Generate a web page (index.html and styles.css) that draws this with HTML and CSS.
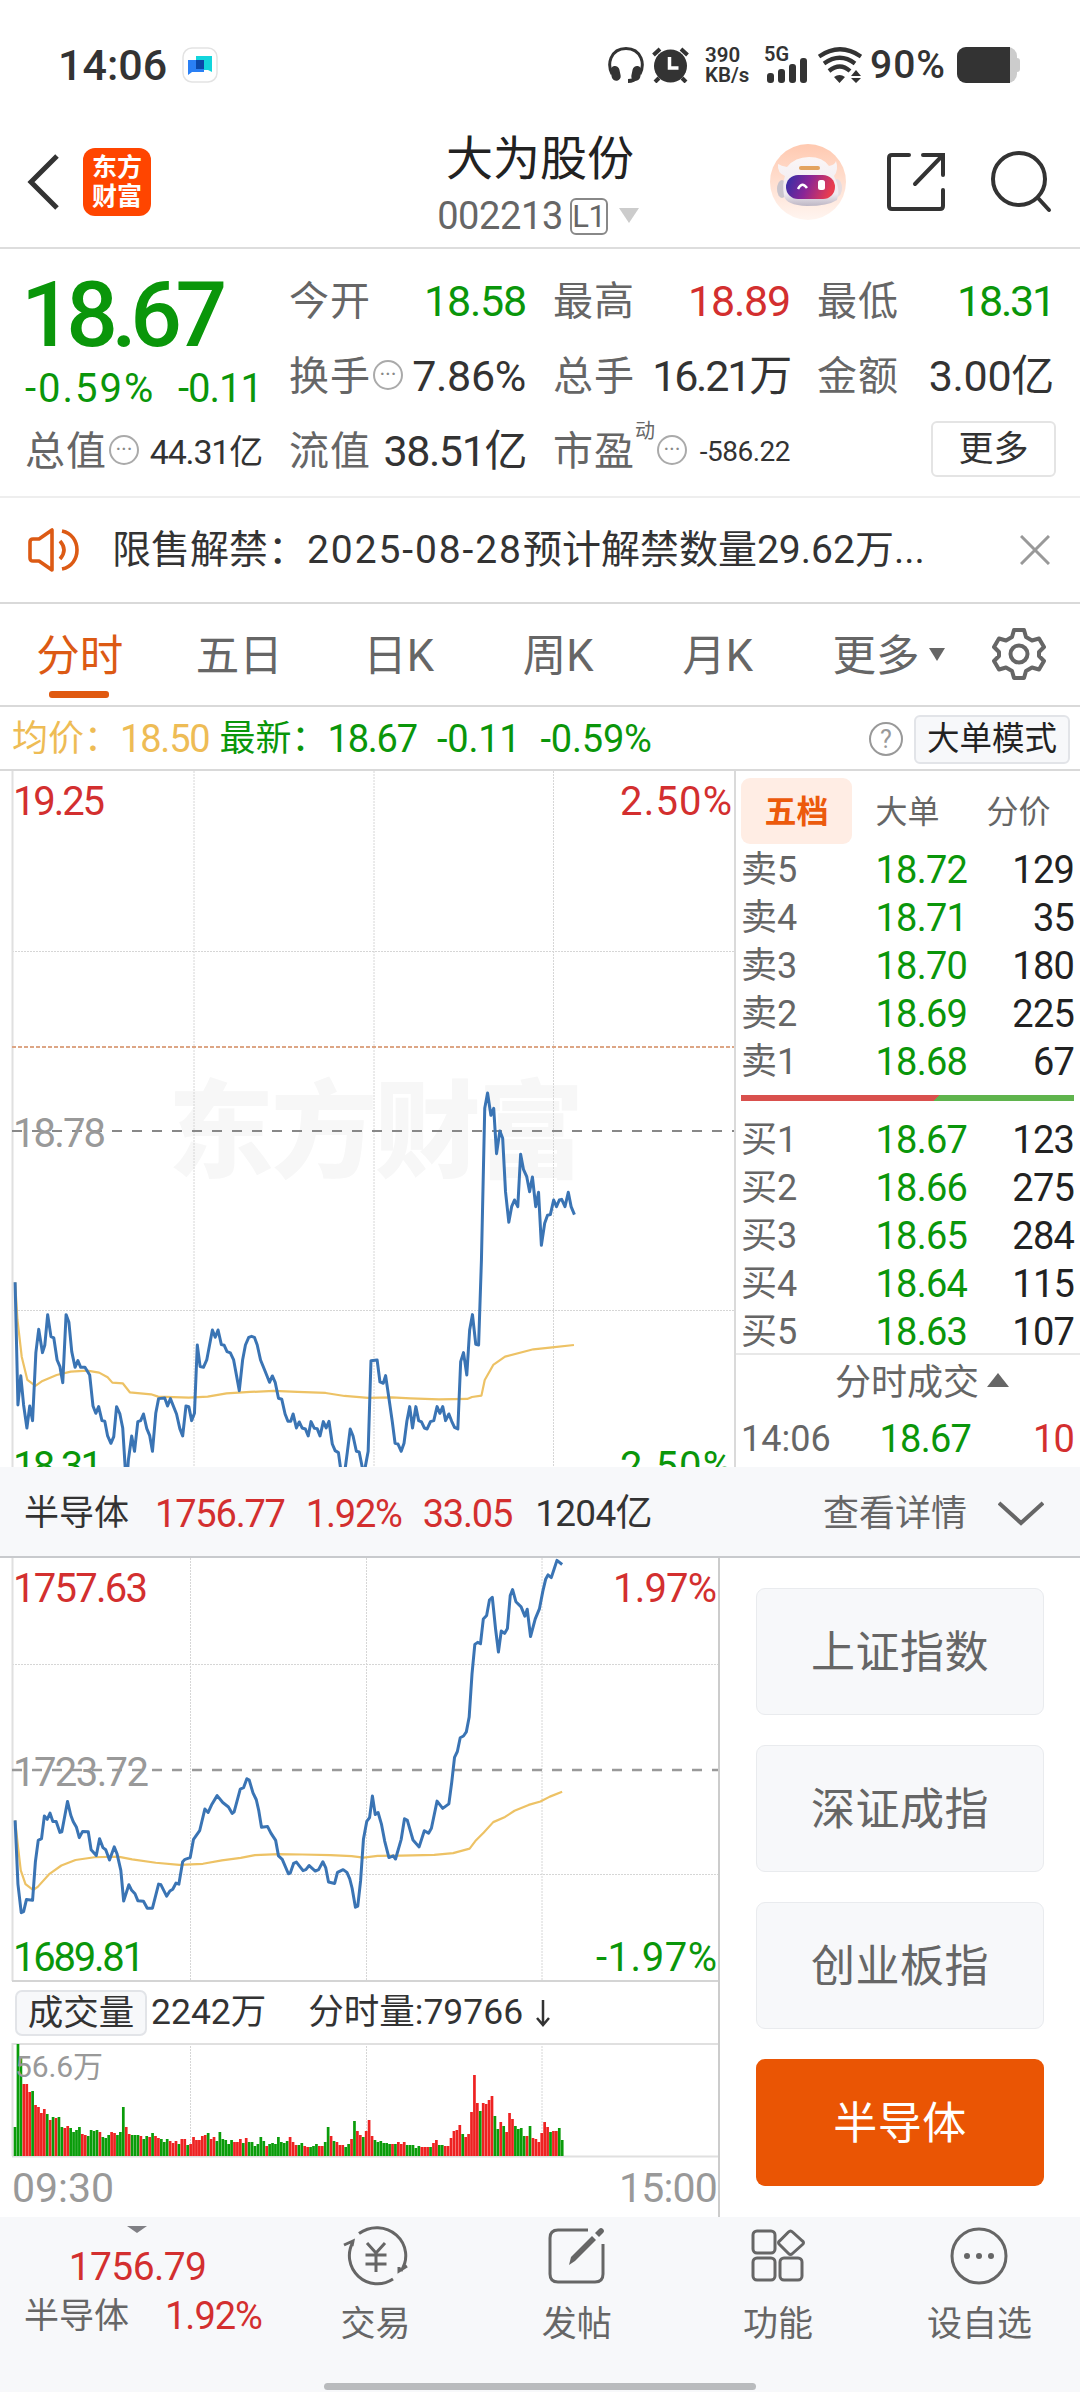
FILE: index.html
```
<!DOCTYPE html>
<html lang="zh-CN">
<head>
    <meta charset="UTF-8">
    <meta name="viewport" content="width=device-width, initial-scale=1.0">
    <title>大为股份 002213</title>
    <link rel="stylesheet" href="styles.css">
</head>
<body>
    <!-- Status bar -->
    <div class="status">
        <span class="clock">14:06</span>
        <svg class="app-badge" width="36" height="36" viewBox="0 0 36 36">
            <rect x="1" y="1" width="34" height="34" rx="9" fill="#fff" stroke="#e3e3e3" stroke-width="1.5"/>
            <path d="M14 9h16v16l-4-2H14z" fill="#12d5dc"/>
            <path d="M6 13h16v12H10l-4 3z" fill="#2a80f5"/>
            <rect x="14" y="13" width="8" height="9" fill="#0a48a8"/>
        </svg>
        <div class="status-right">
            <svg width="36" height="36" viewBox="0 0 36 36" fill="none" stroke="#333" stroke-width="3">
                <path d="M4 27C1 21 1 16 3 11C6 4 12 1.500 18 1.500S30 4 33 11C35 16 35 21 32 27"/>
                <rect x="3" y="19" width="9" height="15" rx="4.500" fill="#333" stroke="none" transform="rotate(-12 7 26)"/>
                <rect x="24" y="19" width="9" height="15" rx="4.500" fill="#333" stroke="none" transform="rotate(12 29 26)"/>
                <path d="M29 30Q26 34 20 34" stroke-width="4"/>
            </svg>
            <svg class="alarm" width="37" height="36" viewBox="0 0 37 36">
                <circle cx="18.500" cy="19" r="16.500" fill="#333"/>
                <path d="M1.500 8L8 2M35.500 8L29 2M7 31l-4 4M30 31l4 4" stroke="#333" stroke-width="4"/>
                <path d="M17.500 10v11h9" fill="none" stroke="#fff" stroke-width="3.500"/>
            </svg>
            <div class="speed"><span>390</span><span>KB/s</span></div>
            <div class="signal">
                <span>5G</span>
                <svg width="42" height="36" viewBox="0 0 42 36" fill="#333">
                    <rect x="0" y="26" width="7" height="10" rx="3"/>
                    <rect x="11" y="22" width="7" height="14" rx="3"/>
                    <rect x="22" y="17" width="7" height="19" rx="3"/>
                    <rect x="33" y="11" width="7" height="25" rx="3"/>
                </svg>
            </div>
            <svg class="wifi" width="44" height="36" viewBox="0 0 44 36" fill="none" stroke="#333" stroke-width="4.200">
                <path d="M1 9.500Q22-5 43 9.500M6 16.500Q22 5 37 16.500M11 24Q22 15 32 24"/>
                <path d="M16 30Q21.500 26 27 30L21.500 36zM33 29l5-6 5 6zM33 31l5 5 5-5z" fill="#333" stroke="none"/>
            </svg>
            <span class="percent">90%</span>
            <svg width="64" height="36" viewBox="0 0 64 36">
                <rect x="0" y="0" width="60" height="36" rx="9" fill="#ccc"/>
                <rect x="56" y="11" width="7" height="14" rx="3" fill="#ccc"/>
                <path d="M9 0h44v36H9a9 9 0 0 1-9-9V9a9 9 0 0 1 9-9z" fill="#333"/>
            </svg>
        </div>
    </div>

    <!-- Title bar -->
    <header class="header">
        <svg class="back" width="34" height="56" viewBox="0 0 34 56" fill="none" stroke="#333" stroke-width="5"><path d="M30 2L4 28l26 26"/></svg>
        <div class="logo"><span>东方</span><span>财富</span></div>
        <div class="title">
            <h1>大为股份</h1>
            <div class="code">002213<span class="level">L1</span><i class="tri-down"></i></div>
        </div>
        <svg class="robot" width="76" height="76" viewBox="0 0 76 76">
            <defs>
                <linearGradient id="skin" x1="0" y1="0" x2="0" y2="1"><stop offset="0" stop-color="#ffc9b0"/><stop offset="1" stop-color="#fff5f0"/></linearGradient>
                <linearGradient id="face" x1="0" y1="0" x2="1" y2="0.200"><stop offset="0" stop-color="#2d2fa8"/><stop offset="0.500" stop-color="#8a2596"/><stop offset="1" stop-color="#e83c50"/></linearGradient>
                <linearGradient id="shell" x1="0" y1="0" x2="0" y2="1"><stop offset="0" stop-color="#fbf6f6"/><stop offset="0.750" stop-color="#efeaf0"/><stop offset="1" stop-color="#bdb6c4"/></linearGradient>
            </defs>
            <circle cx="38" cy="38" r="38" fill="url(#skin)"/>
            <ellipse cx="12" cy="45" rx="5" ry="9" fill="#c9c4cc"/>
            <ellipse cx="67" cy="44" rx="5" ry="9" fill="#e6dce0"/>
            <path d="M8 20q3 2 9 3Q25 13 39 13t20 9q6-1 7-5 3 9-2 15 7 14 3 24Q58 62 37 62 16 61 14 52q-2-12 1-20Q7 29 8 20z" fill="url(#shell)"/>
            <rect x="29" y="22" width="21" height="4" rx="2" fill="#e3a35f"/>
            <rect x="16" y="31" width="49" height="24" rx="12" fill="url(#face)"/>
            <path d="M28 45q4-8 9-1" fill="none" stroke="#fff" stroke-width="2.500"/>
            <rect x="48" y="36" width="7" height="10" rx="2.500" fill="#fff"/>
        </svg>
        <svg class="share" width="58" height="58" viewBox="0 0 58 58" fill="none" stroke="#333" stroke-width="4" stroke-linecap="round">
            <path d="M22 2H5Q2 2 2 5v48q0 3 3 3h48q3 0 3-3V37M36 2h20v20M55 3L28 31"/>
        </svg>
        <svg width="62" height="62" viewBox="0 0 62 62" fill="none" stroke="#333" stroke-width="4" stroke-linecap="round">
            <circle cx="29" cy="28" r="26"/><path d="M48 47l11 12"/>
        </svg>
    </header>

    <!-- Quote summary -->
    <section class="quote">
        <div class="price green">
            <div class="last">18.67</div>
            <div class="change"><span class="pct">-0.59%</span><span class="diff">-0.11</span></div>
        </div>
        <div class="cell"><label>今开</label><b class="green">18.58</b></div>
        <div class="cell"><label>最高</label><b class="red">18.89</b></div>
        <div class="cell"><label>最低</label><b class="green tight">18.31</b></div>
        <div class="cell"><label>换手</label><i class="dots">···</i><b class="wide">7.86%</b></div>
        <div class="cell"><label>总手</label><b class="tight">16.21万</b></div>
        <div class="cell"><label>金额</label><b class="wide">3.00亿</b></div>
        <div class="cell"><label>总值</label><i class="dots">···</i><b class="mid">44.31亿</b></div>
        <div class="cell"><label>流值</label><b class="fit">38.51亿</b></div>
        <div class="cell"><label>市盈</label><sup>动</sup><i class="dots">···</i><b class="small">-586.22</b></div>
        <div class="cell end"><button class="more">更多</button></div>
    </section>

    <!-- Notice -->
    <div class="notice">
        <svg width="53" height="46" viewBox="0 0 53 46" fill="none" stroke="#dc5a14" stroke-width="3.600" stroke-linejoin="round">
            <path d="M24 3v40L11 34H5q-3 0-3-3V15q0-3 3-3h6zM32 14q8 9 0 18M34 4c20 4 20 34 0 38"/>
        </svg>
        <span class="notice-text">限售解禁：<span class="date">2025-08-28</span>预计解禁数量29.62万...</span>
        <svg width="30" height="30" viewBox="0 0 30 30" stroke="#999" stroke-width="3"><path d="M1 1l28 28M29 1L1 29"/></svg>
    </div>

    <!-- Period tabs -->
    <nav class="tabs">
        <a class="active">分时</a><a>五日</a><a>日K</a><a>周K</a><a>月K</a>
        <a class="drop">更多<i></i></a>
        <svg class="gear" width="54" height="54" viewBox="0 0 54 54" fill="none" stroke="#666" stroke-width="4" stroke-linejoin="round">
            <path d="M22 3h10l2 7 6 3.500 7-2 5 8.500-5 5v4l5 5-5 8.500-7-2-6 3.500-2 7H22l-2-7-6-3.500-7 2L2 34l5-5v-4l-5-5 5-8.500 7 2 6-3.500z"/>
            <circle cx="27" cy="27" r="8.500"/>
        </svg>
    </nav>

    <div class="info">
        <span class="yellow">均价：</span><b class="yellow">18.50</b>
        <span class="green latest">最新：</span><b class="green">18.67</b><b class="green gap">-0.11</b><b class="green gap">-0.59%</b>
        <i class="help">?</i>
        <button class="mode">大单模式</button>
    </div>

    <!-- Stock chart and order book -->
    <section class="main">
        <svg class="chart" width="734" height="696" viewBox="0 0 734 696">
            <text class="watermark" x="168" y="398" textLength="416">东方财富</text>
            <g class="grid">
                <path d="M194 0V696M374 0V696M553.500 0V696M12 180.500H734M12 539.500H734"/>
            </g>
            <path d="M12.500 0V696" stroke="#e0e0e0" stroke-width="2"/>
            <path d="M12 276H734" stroke="#dda685" stroke-width="2" stroke-dasharray="4 2"/>
            <path d="M12 360H734" stroke="#888" stroke-width="2" stroke-dasharray="10 10"/>
            <text class="axis red" x="13" y="44" textLength="92">19.25</text>
            <text class="axis red" x="620" y="44" textLength="112">2.50%</text>
            <text class="axis gray" x="13" y="376" textLength="93">18.78</text>
            <text class="axis green" x="13" y="709" textLength="90">18.31</text>
            <text class="axis green" x="620" y="709" textLength="112">2.50%</text>
            <g transform="translate(0 289) scale(0.472 0.3333)">
                <polyline class="avg" points="32,667 37,780 46,890 58,960 75,978 90,963 120,945 150,935 185,932 210,938 228,952 238,968 260,970 275,997 320,1003 335,1010 400,1013 440,1010 480,1000 530,996 580,993 630,996 690,999 730,1008 780,1014 830,1012 870,1015 930,1018 990,1017 1000,1011 1020,1007 1027,960 1045,915 1070,890 1130,868 1170,862 1216,855"/>
                <polyline class="line" points="32,667 38,1035 44,947 50,1035 57,1104 63,1038 69,1082 76,878 82,808 90,878 95,855 101,764 108,830 114,834 121,900 127,920 133,968 140,764 146,787 152,875 159,922 165,902 171,922 180,922 190,945 197,1038 203,1060 209,1040 216,1082 222,1084 228,1128 235,1150 241,1130 247,1040 254,1062 260,1104 266,1240 270,1240 272,1200 279,1128 285,1174 292,1085 298,1082 304,1062 311,1106 317,1126 323,1174 330,1060 336,1016 349,1014 355,1038 361,1016 374,1062 381,1106 387,1128 394,1038 400,1040 406,1082 412,1060 418,855 424,920 431,922 438,900 450,810 456,832 462,810 469,854 475,856 481,875 488,879 495,900 507,992 514,900 520,855 527,832 533,829 539,832 545,855 552,900 560,928 571,967 577,948 583,967 590,1015 597,1018 604,1062 610,1084 616,1084 621,1062 628,1104 634,1086 640,1104 647,1107 653,1128 659,1085 666,1105 672,1106 678,1128 685,1085 691,1104 697,1084 704,1152 710,1172 717,1178 723,1240 730,1240 736,1175 742,1107 748,1128 755,1174 761,1176 770,1240 774,1220 780,1174 786,902 799,900 805,966 812,970 817,947 824,1015 831,1084 837,1150 843,1152 850,1174 856,1150 862,1084 868,1040 874,1104 881,1040 887,1082 893,1086 899,1104 905,1107 912,1085 919,1082 926,1040 932,1060 938,1040 944,1082 951,1062 957,1084 963,1102 970,1107 976,905 982,878 989,945 995,810 1001,764 1008,853 1014,855 1020,600 1027,145 1033,99 1040,166 1046,145 1052,281 1059,213 1065,235 1071,395 1078,487 1084,440 1090,420 1097,440 1103,283 1109,328 1116,350 1122,395 1128,351 1135,440 1141,397 1147,556 1154,490 1160,466 1166,464 1173,420 1179,440 1185,420 1190,418 1197,440 1204,397 1210,440 1217,464"/>
            </g>
        </svg>
        <aside class="book">
            <div class="book-tabs"><a class="on">五档</a><a>大单</a><a>分价</a></div>
            <div class="row"><span>卖5</span><b>18.72</b><em>129</em></div>
            <div class="row"><span>卖4</span><b>18.71</b><em>35</em></div>
            <div class="row"><span>卖3</span><b>18.70</b><em>180</em></div>
            <div class="row"><span>卖2</span><b>18.69</b><em>225</em></div>
            <div class="row"><span>卖1</span><b>18.68</b><em>67</em></div>
            <div class="ratio"></div>
            <div class="row"><span>买1</span><b>18.67</b><em>123</em></div>
            <div class="row"><span>买2</span><b>18.66</b><em>275</em></div>
            <div class="row"><span>买3</span><b>18.65</b><em>284</em></div>
            <div class="row"><span>买4</span><b>18.64</b><em>115</em></div>
            <div class="row"><span>买5</span><b>18.63</b><em>107</em></div>
            <div class="ticks">分时成交<i></i></div>
            <div class="row tick"><span>14:06</span><b>18.67</b><em class="red">10</em></div>
        </aside>
    </section>

    <!-- Sector strip -->
    <div class="sector">
        <span class="name">半导体</span><b class="red">1756.77</b><b class="red">1.92%</b><b class="red">33.05</b><b class="amount">1204亿</b>
        <span class="detail">查看详情</span>
        <svg width="46" height="26" viewBox="0 0 46 26" fill="none" stroke="#666" stroke-width="4"><path d="M1 2l22 20L45 2"/></svg>
    </div>

    <section class="index">
        <div class="index-left">
            <svg class="chart" width="718" height="424" viewBox="0 0 718 424">
                <g class="grid"><path d="M190.500 0V423M366.500 0V423M542 0V423M12 106.500H718M12 316.500H718"/></g>
                <path d="M12.500 0V423" stroke="#e0e0e0" stroke-width="2"/>
                <path d="M12 423H718" stroke="#d4d4d4" stroke-width="2"/>
                <path d="M12 212H718" stroke="#999" stroke-width="2.500" stroke-dasharray="10 10"/>
                <text class="axis red" x="13" y="44" textLength="135">1757.63</text>
                <text class="axis red" x="613" y="44" textLength="104">1.97%</text>
                <text class="axis gray" x="13" y="228" textLength="136">1723.72</text>
                <text class="axis green" x="13" y="413" textLength="132">1689.81</text>
                <text class="axis green" x="596" y="413" textLength="121">-1.97%</text>
                <g transform="translate(0 -97.500) scale(0.472 0.3444)">
                    <polyline class="avg" points="32,1045 38,1120 44,1190 54,1230 70,1247 80,1238 105,1200 130,1176 160,1160 200,1152 250,1150 280,1158 330,1168 380,1174 430,1171 470,1161 510,1154 540,1146 590,1143 640,1144 700,1146 745,1149 770,1153 800,1148 850,1147 920,1145 960,1140 995,1127 1007,1105 1025,1080 1045,1050 1070,1035 1090,1017 1120,1000 1145,990 1165,976 1191,962"/>
                    <polyline class="line" points="32,1045 38,1230 45,1313 50,1310 56,1275 69,1277 75,1165 81,1103 88,1098 94,1032 100,1042 106,1024 112,1048 119,1048 127,1080 131,1078 143,990 150,1030 155,1048 162,1065 168,1095 175,1077 187,1078 193,1130 204,1147 211,1098 218,1124 224,1130 232,1160 242,1122 248,1142 256,1190 262,1279 273,1232 279,1248 286,1258 292,1278 304,1280 312,1300 323,1300 336,1230 341,1232 353,1265 360,1250 366,1245 373,1227 379,1230 387,1165 392,1158 403,1153 410,1100 423,1075 434,1012 441,1022 449,998 460,973 472,993 484,1006 492,1025 496,1020 509,954 516,950 523,924 528,928 536,965 543,985 548,1015 554,1065 567,1063 574,1082 584,1103 590,1148 598,1158 611,1200 615,1198 622,1170 628,1166 642,1191 648,1188 655,1176 668,1192 675,1188 684,1165 690,1182 696,1224 709,1228 715,1196 727,1188 735,1196 741,1215 746,1242 753,1297 758,1294 764,1220 770,1100 777,1048 783,1037 789,974 795,1028 801,1022 808,1055 815,1105 824,1153 833,1148 838,1157 850,1100 857,1040 863,1045 875,1102 888,1122 899,1075 908,1082 914,1068 926,989 938,1010 951,997 957,935 963,862 969,845 975,805 982,800 988,788 994,745 1000,620 1006,534 1012,528 1018,532 1024,460 1031,450 1037,405 1043,397 1050,490 1056,556 1062,495 1069,502 1075,488 1081,392 1086,375 1093,410 1104,425 1112,452 1117,432 1124,511 1134,460 1143,430 1150,380 1156,345 1161,332 1168,340 1174,315 1180,290 1191,302"/>
                </g>
            </svg>
            <div class="vol-head"><button>成交量</button><span>2242万</span><span class="minute">分时量:79766<svg width="14" height="28" viewBox="0 0 14 28" fill="none" stroke="#333" stroke-width="2.500"><path d="M7 1v24M1 19l6 7 6-7"/></svg></span></div>
            <svg class="chart" width="718" height="115" viewBox="0 0 718 115">
                <g class="grid"><path d="M190.500 0V112M366.500 0V112M542 0V112"/></g>
                <path d="M12.500 0V113M12 1H718M12 113.500H718" fill="none" stroke="#e0e0e0" stroke-width="2"/>
                <g id="bars"></g>
                <text class="vol-label" x="15" y="34" textLength="88">56.6万</text>
            </svg>
            <div class="time"><span>09:30</span><span class="close">15:00</span></div>
        </div>
        <div class="index-right">
            <button>上证指数</button>
            <button>深证成指</button>
            <button>创业板指</button>
            <button class="on">半导体</button>
        </div>
    </section>

    <!-- Bottom bar -->
    <footer class="bottom">
        <div class="mini">
            <i></i>
            <b>1756.79</b>
            <div><span>半导体</span><em>1.92%</em></div>
        </div>
        <div class="item">
            <svg width="66" height="60" viewBox="0 0 66 60" fill="none" stroke="#666" stroke-width="3">
                <path d="M16 7.500A29 28 0 0 1 58 45M64 40l-8 5 0-4M50 53A28 28 0 0 1 10 16M1 19l9-4-1 5"/>
                <path d="M24 17l9 10 9-10M33 27v19M22.500 29h21M22.500 38h21"/>
            </svg>
            <span>交易</span>
        </div>
        <div class="item">
            <svg width="58" height="60" viewBox="0 0 58 60" fill="none" stroke="#666" stroke-width="3">
                <path d="M40 4H10q-8 0-8 8v36q0 8 8 8h37q8 0 8-8V18"/>
                <path d="M21 39l2-8L44 10l4 4L27 35zM47 7l4-4q2-2 4 0t0 4l-4 4z" fill="#666" stroke="none"/>
            </svg>
            <span>发帖</span>
        </div>
        <div class="item">
            <svg width="56" height="60" viewBox="0 0 56 60" fill="none" stroke="#666" stroke-width="3">
                <rect x="3" y="5" width="22" height="22" rx="4"/><rect x="3" y="32" width="22" height="22" rx="4"/><rect x="30" y="32" width="22" height="22" rx="4"/>
                <path d="M38.500 6q2-2 4 0l10 9q2 1.500 0 3.500l-10 9q-2 2-4 0l-9-9q-2-2 0-3.500z"/>
            </svg>
            <span>功能</span>
        </div>
        <div class="item">
            <svg width="58" height="60" viewBox="0 0 58 60" fill="none" stroke="#666" stroke-width="3">
                <circle cx="29" cy="30" r="27"/>
                <g fill="#666" stroke="none"><circle cx="17" cy="30" r="3"/><circle cx="29" cy="30" r="3"/><circle cx="41" cy="30" r="3"/></g>
            </svg>
            <span>设自选</span>
        </div>
        <div class="home"></div>
    </footer>

    <script src="script.js"></script>
</body>
</html>
```
FILE: styles.css
```
* {
    box-sizing: border-box;
}
body {
    margin: 0;
    width: 1080px;
    height: 2392px;
    overflow: hidden;
    background: #fff;
    color: #333;
    font-family: Roboto, "Noto Sans CJK SC", sans-serif;
    line-height: 1;
}
b, em, i {
    font-weight: normal;
    font-style: normal;
}
button {
    font: inherit;
    color: inherit;
    padding: 0;
    background: #f7f8fa;
    border: 2px solid #e2e4e8;
    white-space: nowrap;
}
svg {
    display: block;
    flex: none;
}
.green { color: #0a960a; fill: #0a960a; }
.red { color: #d32f2f; fill: #d32f2f; }
.gray { fill: #999; }
.yellow { color: #eebc55; }

/* Status bar */
.status {
    display: flex;
    align-items: center;
    height: 130px;
    padding: 0 59px 0 58px;
}
.clock {
    width: 124px;
    font-size: 43px;
    font-weight: 500;
}
.status-right {
    display: flex;
    align-items: center;
    margin-left: auto;
}
.alarm {
    margin-left: 8px;
}
.speed {
    display: flex;
    flex-direction: column;
    width: 44px;
    margin-left: 16px;
    font-size: 20.5px;
    font-weight: 600;
}
.signal {
    position: relative;
    margin-left: 18px;
}
.signal span {
    position: absolute;
    left: -3px;
    top: -3px;
    font-size: 20px;
    font-weight: 600;
}
.wifi {
    margin-left: 9px;
}
.percent {
    width: 87px;
    margin-left: 8px;
    font-size: 39px;
    font-weight: 500;
    letter-spacing: 1px;
}

/* Title bar */
.header {
    position: relative;
    display: flex;
    align-items: center;
    height: 119px;
    padding: 0 28px 13px 27px;
    border-bottom: 2px solid #ddd;
}
.logo {
    display: flex;
    flex-direction: column;
    align-items: center;
    justify-content: center;
    width: 68px;
    height: 68px;
    margin-left: 22px;
    border-radius: 12px;
    background: #ff4500;
    color: #fff;
    font-size: 25px;
    font-weight: 700;
    line-height: 29px;
}
.title {
    position: absolute;
    left: 0;
    right: 0;
    top: 0;
    display: flex;
    flex-direction: column;
    align-items: center;
    pointer-events: none;
}
.title h1 {
    margin: 4px 0 0;
    font-size: 47px;
    font-weight: 400;
    line-height: 50px;
    color: #222;
}
.code {
    display: flex;
    align-items: center;
    height: 40px;
    margin: 12px 4px 0 0;
    font-size: 38px;
    letter-spacing: -0.4px;
    color: #666;
}
.level {
    width: 38px;
    height: 37px;
    margin-left: 7px;
    border: 2px solid #888;
    border-radius: 6px;
    font-size: 31px;
    line-height: 34px;
    text-align: center;
}
.tri-down {
    margin: -2px 0 0 11px;
    border: 10px solid transparent;
    border-top: 15px solid #ccc;
    border-bottom: 0;
}
.robot {
    margin-left: auto;
}
.share {
    margin: 0 45px 0 41px;
}

/* Quote summary */
.quote {
    display: grid;
    grid-template-columns: repeat(4, 237px);
    grid-template-rows: repeat(3, 75px);
    column-gap: 27px;
    height: 249px;
    padding: 15px 25px 0;
    border-bottom: 2px solid #eee;
}
.price {
    grid-row: span 2;
}
.last {
    height: 98px;
    font-size: 91px;
    font-weight: 500;
    line-height: 102px;
    letter-spacing: -6.5px;
    margin-left: -4px;
}
.change {
    display: flex;
    justify-content: space-between;
    align-items: center;
    height: 54px;
    font-size: 40px;
    white-space: nowrap;
}
.pct {
    letter-spacing: 2px;
}
.diff {
    letter-spacing: -1px;
}
.cell {
    display: flex;
    align-items: center;
    white-space: nowrap;
}
.cell label {
    font-size: 40px;
    letter-spacing: 1px;
    color: #666;
}
.cell b {
    margin-left: auto;
    font-size: 43px;
    letter-spacing: -1.2px;
}
.cell .wide {
    letter-spacing: -0.3px;
}
.cell .tight {
    letter-spacing: -2.2px;
}
.cell .fit {
    letter-spacing: -1.4px;
}
.cell .mid {
    font-size: 34px;
    letter-spacing: -1.2px;
}
.cell .small {
    font-size: 28px;
    letter-spacing: -0.5px;
}
.cell sup {
    align-self: flex-start;
    margin-top: 7px;
    font-size: 20px;
    width: 20px;
    color: #666;
}
.dots {
    width: 30px;
    height: 30px;
    margin: -4px 0 0 2px;
    border: 2px solid #aaa;
    border-radius: 50%;
    font-size: 22px;
    line-height: 26px;
    text-align: center;
    color: #888;
}
.cell.end {
    justify-content: flex-end;
}
.more {
    width: 125px;
    height: 56px;
    margin: -5px -2px 0 0;
    border-color: #e4e4e4;
    border-radius: 6px;
    background: #fff;
    font-size: 35px;
}

/* Notice */
.notice {
    display: flex;
    align-items: center;
    height: 106px;
    padding: 0 30px 0 28px;
    border-bottom: 2px solid #d9d9d9;
}
.notice-text {
    flex: 1;
    margin-left: 31px;
    font-size: 39px;
    white-space: nowrap;
}
.date {
    letter-spacing: 1.9px;
}

/* Period tabs */
.tabs {
    display: flex;
    align-items: center;
    height: 103px;
    padding-top: 5px;
    border-bottom: 2px solid #d9d9d9;
    font-size: 43.5px;
    color: #666;
}
.tabs a {
    position: relative;
    width: 159.5px;
    text-align: center;
}
.tabs .active {
    color: #dc5a14;
}
.tabs .active::after {
    content: "";
    position: absolute;
    left: 49px;
    top: 56px;
    width: 60px;
    height: 7px;
    border-radius: 3px;
    background: #e0590f;
}
.tabs .drop {
    display: flex;
    align-items: center;
    padding-left: 35px;
}
.drop i {
    margin: -5px 0 0 9px;
    border: 8px solid transparent;
    border-top: 13px solid #666;
    border-bottom: 0;
}
.gear {
    margin: -6px 34px 0 auto;
}

.info {
    display: flex;
    align-items: center;
    height: 64px;
    padding: 2px 10px 0 12px;
    border-bottom: 2px solid #d9d9d9;
    font-size: 36px;
    white-space: nowrap;
}
.info b {
    font-size: 38px;
    letter-spacing: -1.2px;
}
.info .latest {
    margin-left: 10px;
}
.info .gap {
    margin-left: 20px;
    letter-spacing: -0.2px;
}
.help {
    width: 34px;
    height: 34px;
    margin-left: auto;
    border: 2px solid #999;
    border-radius: 50%;
    font-size: 25px;
    line-height: 31px;
    text-align: center;
    color: #999;
}
.mode {
    width: 156px;
    height: 49px;
    margin-left: 11px;
    border-radius: 6px;
    font-size: 32.5px;
    color: #222;
}

/* Charts */
.grid path {
    fill: none;
    stroke: #d6d6d6;
    stroke-width: 1;
    stroke-dasharray: 2 1;
}
.line, .avg {
    fill: none;
    stroke: #3a74b4;
    stroke-width: 3;
    stroke-linejoin: round;
    vector-effect: non-scaling-stroke;
}
.avg {
    stroke: #edc265;
    stroke-width: 2.2;
}
.axis {
    font-size: 40px;
}
.watermark {
    font-size: 106px;
    font-weight: 900;
    fill: #f7f7f7;
}
.vol-label {
    font-size: 30px;
    fill: #999;
}

.main {
    display: flex;
    height: 696px;
}
.book {
    width: 346px;
    padding: 7px 6px 0 5px;
    border-left: 2px solid #dadada;
}
.book-tabs {
    display: flex;
    height: 66px;
    margin-bottom: 2px;
    line-height: 68px;
    font-size: 32px;
    color: #666;
    text-align: center;
}
.book-tabs a {
    width: 111px;
}
.book-tabs .on {
    border-radius: 9px;
    background: #ffede4;
    color: #ec5a0c;
    font-weight: 700;
}
.row {
    display: flex;
    align-items: center;
    height: 48px;
    font-size: 38px;
    letter-spacing: -0.8px;
}
.row span {
    width: 100px;
    font-size: 36px;
    letter-spacing: 0;
    color: #666;
}
.row b {
    width: 126px;
    text-align: right;
    color: #0a960a;
}
.row em {
    flex: 1;
    text-align: right;
    color: #222;
}
.ratio {
    height: 6px;
    margin: 9px 0 15px;
    background: linear-gradient(135deg, #d9504d 58.7%, #5fb44d 58.7%);
}
.ticks {
    display: flex;
    align-items: center;
    justify-content: center;
    height: 57px;
    margin: -3px -6px 0 -5px;
    padding-left: 28px;
    border-top: 2px solid #e8e8e8;
    font-size: 36px;
    color: #666;
}
.ticks i {
    margin: -6px 0 0 8px;
    border: 11px solid transparent;
    border-bottom: 14px solid #666;
    border-top: 0;
}
.tick {
    height: 58px;
}
.tick b {
    width: 130px;
}
.row em.red {
    color: #d32f2f;
}

/* Sector strip */
.sector {
    display: flex;
    align-items: center;
    height: 91px;
    padding: 4px 36px 0 24px;
    background: #f7f8fa;
    border-bottom: 2px solid #c8cacd;
    font-size: 38px;
    letter-spacing: -1.2px;
}
.sector b {
    margin-left: 21px;
}
.sector .name {
    width: 110px;
    font-size: 35px;
    letter-spacing: 0;
}
.sector .amount {
    margin-left: 23px;
    font-size: 37px;
    letter-spacing: -0.7px;
}
.sector .detail {
    margin: 0 31px 0 auto;
    font-size: 36px;
    letter-spacing: 0;
    color: #666;
}

.index {
    display: flex;
    height: 659px;
}
.index-left {
    width: 720px;
    border-right: 2px solid #ccc;
}
.vol-head {
    display: flex;
    align-items: center;
    height: 61px;
    padding-left: 15px;
    font-size: 35.5px;
    white-space: nowrap;
}
.vol-head button {
    width: 132px;
    height: 46px;
    border-radius: 7px;
    line-height: 40px;
}
.vol-head span {
    margin-left: 4px;
}
.vol-head .minute {
    display: flex;
    align-items: center;
    margin-left: 42px;
}
.minute svg {
    margin-left: 13px;
}
.time {
    display: flex;
    justify-content: space-between;
    align-items: center;
    height: 58px;
    padding: 2px 1px 0 12px;
    font-size: 41px;
    color: #999;
}
.close {
    letter-spacing: -0.8px;
}
.index-right {
    display: flex;
    flex-direction: column;
    gap: 30px;
    padding: 30px 0 0 36px;
}
.index-right button {
    width: 288px;
    height: 127px;
    padding-top: 3px;
    border: 1px solid #e9ebee;
    border-radius: 9px;
    font-size: 44px;
    letter-spacing: 0.5px;
    color: #666;
}
.index-right .on {
    border: 0;
    background: #ea5504;
    color: #fff;
}

/* Bottom bar */
.bottom {
    position: relative;
    display: flex;
    height: 176px;
    background: #f7f8fa;
    color: #666;
}
.mini {
    display: flex;
    flex-direction: column;
    align-items: center;
    width: 275px;
    padding-top: 9px;
}
.mini i {
    border: 10px solid transparent;
    border-top: 7px solid #808085;
    border-bottom: 0;
}
.mini b {
    height: 40px;
    margin-top: 13px;
    font-size: 39px;
    line-height: 42px;
    letter-spacing: -0.6px;
    color: #d32f2f;
}
.mini div {
    display: flex;
    align-items: center;
    gap: 36px;
    margin: 11px 0 0 11px;
    font-size: 35px;
}
.mini em {
    font-size: 38px;
    letter-spacing: -1px;
    color: #d32f2f;
}
.item {
    display: flex;
    flex-direction: column;
    align-items: center;
    width: 201.300px;
    padding-top: 9px;
    font-size: 35px;
}
.item span {
    margin-top: 21px;
}
.home {
    position: absolute;
    left: 324px;
    bottom: 3px;
    width: 432px;
    height: 7px;
    border-radius: 4px;
    background: #b9bbbd;
}
```
FILE: script.js
```
// One entry per minute since 09:30: bar height, then r (up) or g (down)
const volumes = `29g 112g 100g 72r 72r 64r 65g 51r 49r 43r 47r 42g 36r 39g 38r 39g 29g 28r 30r 28g
24g 26g 29g 22r 21r 20g 26g 25g 26g 24r 19g 18g 21g 24r 23r 21g 24g 49g 29r 22r
21g 21g 21g 20r 17g 20g 19r 23g 20r 18r 17g 14g 17g 15r 13r 15r 12g 17r 17r 11g
12r 19r 16r 16r 20r 21r 23g 17r 19r 15g 24g 17g 16g 12g 16g 14r 14r 17r 13g 18r
14g 14g 10g 12g 19g 15g 10r 12g 13g 12g 19g 14g 13g 15g 19r 14r 11r 11g 13g 10r
9r 9g 10g 12g 10r 10r 14g 29g 20r 15g 14r 11r 11r 9g 12g 17r 35g 25r 21r 19g
25r 36r 20r 16g 14g 15g 13g 13g 12g 12r 12g 14r 12r 14r 11g 11g 11g 8g 10g 9r
9r 9r 9g 13r 16r 11g 11g 10r 10r 18r 25r 26r 31r 22g 19r 22r 44r 81r 53r 45g
53r 52r 56r 60r 40g 27g 34r 30g 24r 43r 37r 30g 27g 28g 20g 20r 30g 18r 17r 14r
23r 34r 29r 24g 25r 25r 28g 16g`.split(/\s+/);

const bars = document.getElementById('bars');
volumes.forEach((v, i) => {
    const h = parseInt(v);
    const rect = document.createElementNS('http://www.w3.org/2000/svg', 'rect');
    rect.setAttribute('x', 13.7 + i * 2.926);
    rect.setAttribute('y', 113 - h);
    rect.setAttribute('width', 2.7);
    rect.setAttribute('height', h);
    rect.setAttribute('fill', v.endsWith('r') ? '#ee2222' : '#0a9c0a');
    bars.appendChild(rect);
});
```
